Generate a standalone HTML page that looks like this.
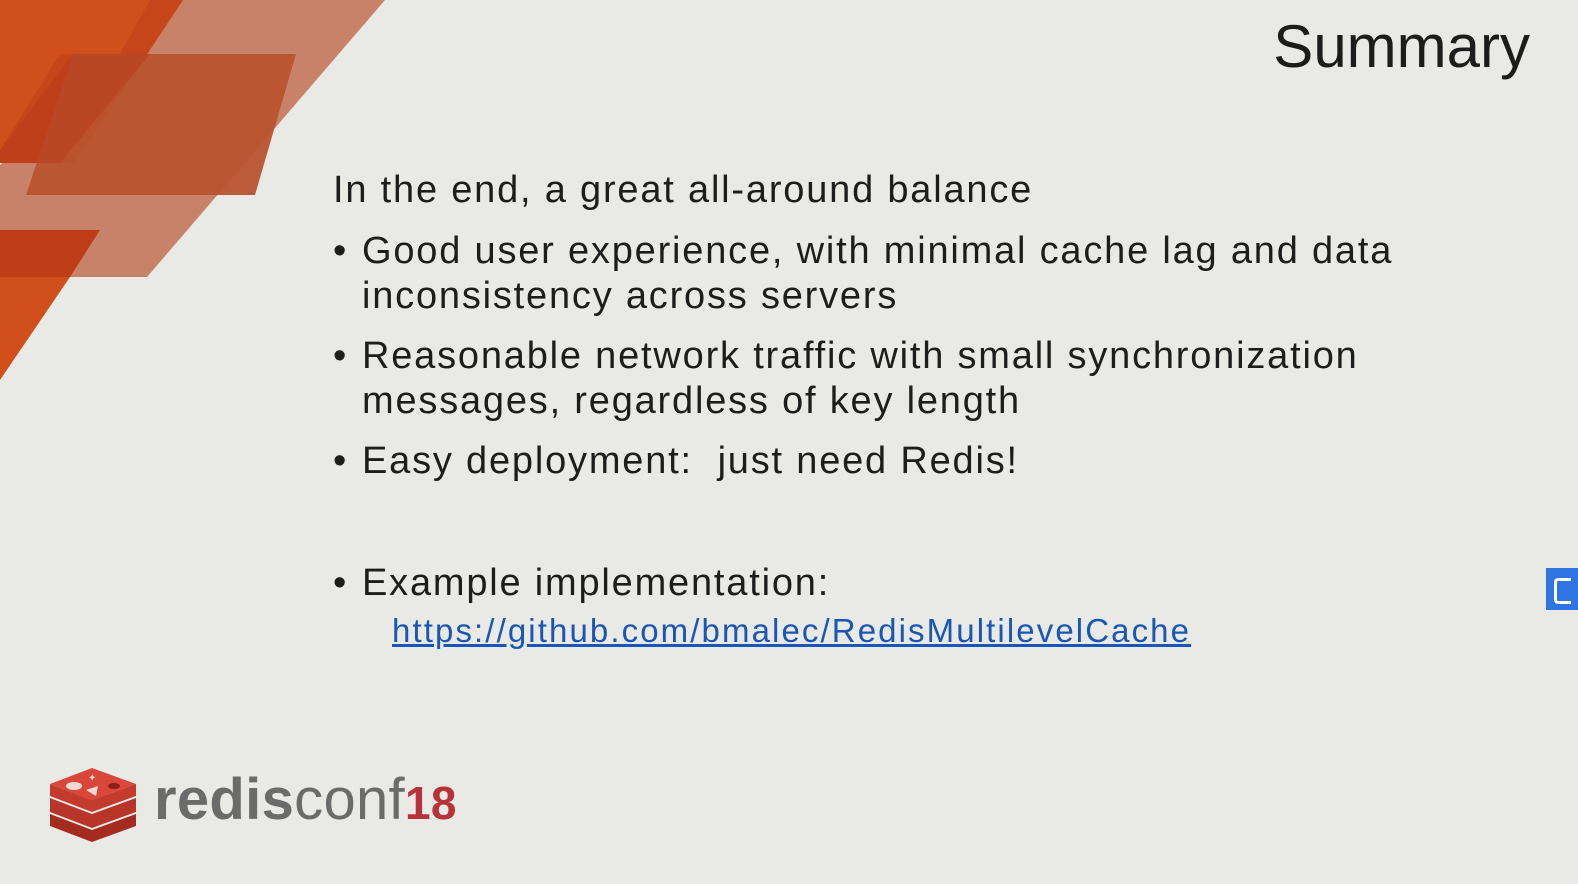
<!DOCTYPE html>
<html><head><meta charset="utf-8"><style>
html,body{margin:0;padding:0}
body{width:1578px;height:884px;background:#e9e9e6;position:relative;overflow:hidden;font-family:"Liberation Sans",sans-serif;color:#1d1d1d}
.t{position:absolute;white-space:nowrap}
.b{font-size:38px;letter-spacing:1.8px}
</style></head><body>
<svg width="400" height="400" style="position:absolute;left:0;top:0">
<polygon points="183,0 385,0 147,277 0,277 0,165" fill="#c8826a"/>
<polygon points="0,0 183,0 75,163 0,163" fill="#d14f1a"/>
<polygon points="150,0 183,0 75,163 0,163 0,150 60,54 120,54" fill="#c0401a" opacity="0.6"/>
<polygon points="73,54 296,54 255,195 26,195" fill="#b9532f" opacity="0.95"/>
<polygon points="73,54 150,54 60,163 0,163 0,150" fill="#b8391a" opacity="0.5"/>
<polygon points="0,230 100,230 70,277 0,277" fill="#bf3c18"/>
<polygon points="0,277 70,277 0,380" fill="#d14f1a"/>
</svg>
<div class="t" style="right:48px;top:12px;font-size:60px;color:#1c1c1c">Summary</div>
<div class="t b" style="left:333px;top:169px">In the end, a great all-around balance</div>
<div class="t b" style="left:333px;top:230px">•</div>
<div class="t b" style="left:362px;top:230px">Good user experience, with minimal cache lag and data</div>
<div class="t b" style="left:362px;top:275px">inconsistency across servers</div>
<div class="t b" style="left:333px;top:335px">•</div>
<div class="t b" style="left:362px;top:335px">Reasonable network traffic with small synchronization</div>
<div class="t b" style="left:362px;top:380px">messages, regardless of key length</div>
<div class="t b" style="left:333px;top:440px">•</div>
<div class="t b" style="left:362px;top:440px">Easy deployment:&nbsp; just need Redis!</div>
<div class="t b" style="left:333px;top:562px">•</div>
<div class="t b" style="left:362px;top:562px">Example implementation:</div>
<div class="t" style="left:392px;top:612px;font-size:33px;letter-spacing:2.1px;color:#1a56b5;text-decoration:underline">https://github.com/bmalec/RedisMultilevelCache</div>
<svg width="90" height="80" style="position:absolute;left:48px;top:764px">
<polygon points="2,50 44,66 88,50 88,62 44,78 2,62" fill="#a42b1f"/>
<polygon points="2,34 44,50 88,34 88,48 44,64 2,48" fill="#b8352a"/>
<polygon points="2,20 44,36 88,20 88,32 44,48 2,32" fill="#c33b2e"/>
<polygon points="2,20 44,4 88,20 44,36" fill="#d9463a"/>
<ellipse cx="26" cy="22" rx="8" ry="4" fill="#f3d9d6"/>
<polygon points="38,26 50,22 48,32" fill="#f3d9d6"/>
<text x="40" y="17" font-size="10" fill="#f3d9d6">✦</text>
<ellipse cx="66" cy="22" rx="6" ry="3" fill="#8b1f16"/>
</svg>
<div class="t" style="left:154px;top:766px;font-size:58px;color:#6b6b6b;letter-spacing:0.3px"><b>redis</b>conf<span style="color:#b8323a;font-weight:bold;font-size:46px">18</span></div>
<div style="position:absolute;left:1546px;top:568px;width:32px;height:42px;background:#2f74e0"></div>
<div style="position:absolute;left:1554px;top:578px;width:14px;height:20px;border:3px solid #fff;border-right:none;border-radius:4px 0 0 4px"></div>
</body></html>
